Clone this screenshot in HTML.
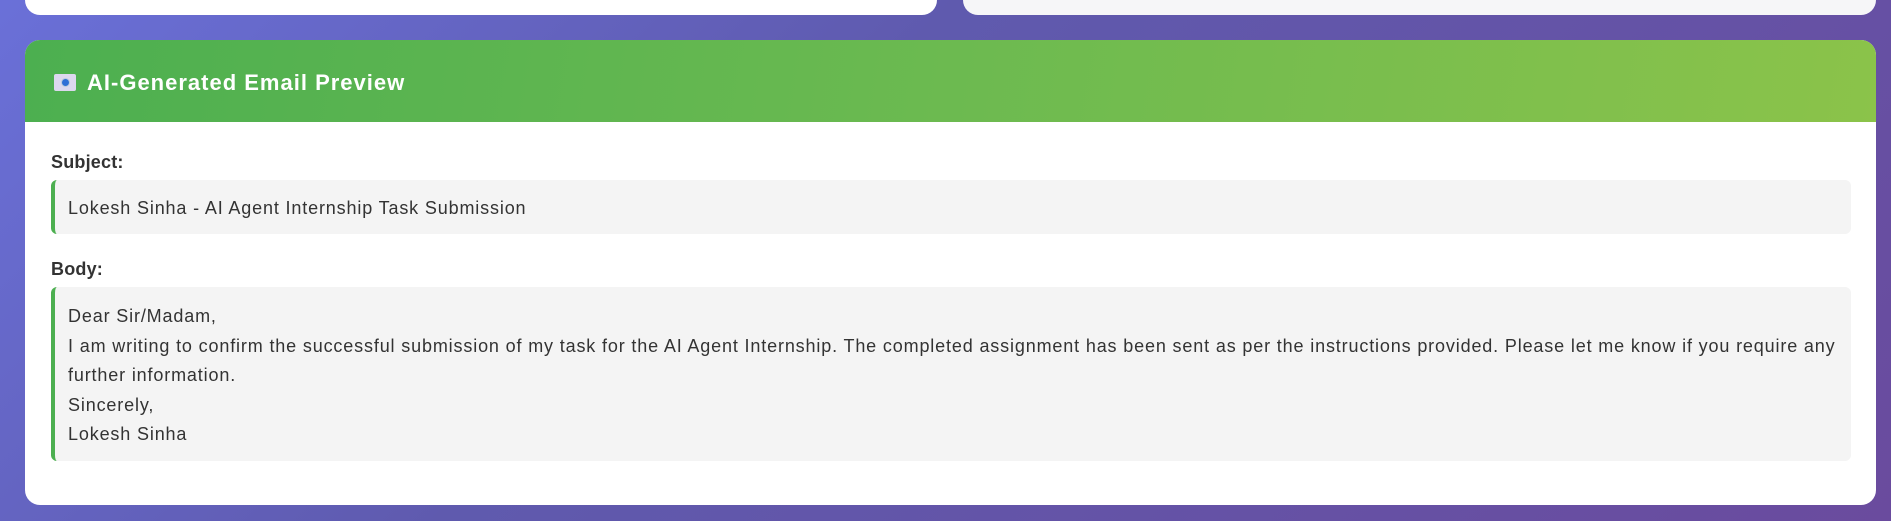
<!DOCTYPE html>
<html><head><meta charset="utf-8"><style>
*{box-sizing:border-box;margin:0;padding:0}
html,body{width:1891px;height:521px;overflow:hidden}
body{background:linear-gradient(135deg,#6a70d8 0%,#5f5aae 40%,#6a4b9e 100%);font-family:"Liberation Sans",sans-serif;position:relative}
.top{position:absolute;top:-20px;height:35px;background:#fff;border-radius:15px}
.card{position:absolute;left:25px;top:40px;width:1851px;height:465px;background:#fff;border-radius:15px;overflow:hidden}
.hdr{height:82px;background:linear-gradient(100deg,#4caf50 0%,#6cba50 50%,#8bc34a 100%);display:flex;align-items:center;padding-left:29px;padding-top:3px;color:#fff;font-weight:bold;font-size:22px;letter-spacing:1px}
.ico{width:22px;height:17px;background:#dcd8ee;border-radius:2px;margin-right:11px;display:flex;align-items:center;justify-content:center}
.ico span{width:9px;height:9px;border-radius:50%;background:#2f6fd6;border:1.5px solid #bcd}
.lbl{position:absolute;left:26px;font-weight:bold;font-size:18px;color:#333;letter-spacing:0.2px}
.box{position:absolute;left:26px;width:1800px;background:#f4f4f4;border-left:4px solid #4caf50;border-radius:6px;padding-left:13px;font-size:18px;letter-spacing:0.85px;color:#333;white-space:nowrap}
</style></head><body>
<div class="top" style="left:25px;width:912px"></div>
<div class="top" style="left:963px;width:913px;background:#f6f6f8"></div>
<div class="card">
<div class="hdr"><div class="ico"><span></span></div>AI-Generated Email Preview</div>
<div class="lbl" style="top:112px">Subject:</div>
<div class="box" style="top:140px;height:54px;line-height:56px">Lokesh Sinha - AI Agent Internship Task Submission</div>
<div class="lbl" style="top:219px">Body:</div>
<div class="box" style="top:247px;height:174px;padding-top:15px;line-height:29.5px">Dear Sir/Madam,<br>I am writing to confirm the successful submission of my task for the AI Agent Internship. The completed assignment has been sent as per the instructions provided. Please let me know if you require any<br>further information.<br>Sincerely,<br>Lokesh Sinha</div>
</div>
</body></html>
